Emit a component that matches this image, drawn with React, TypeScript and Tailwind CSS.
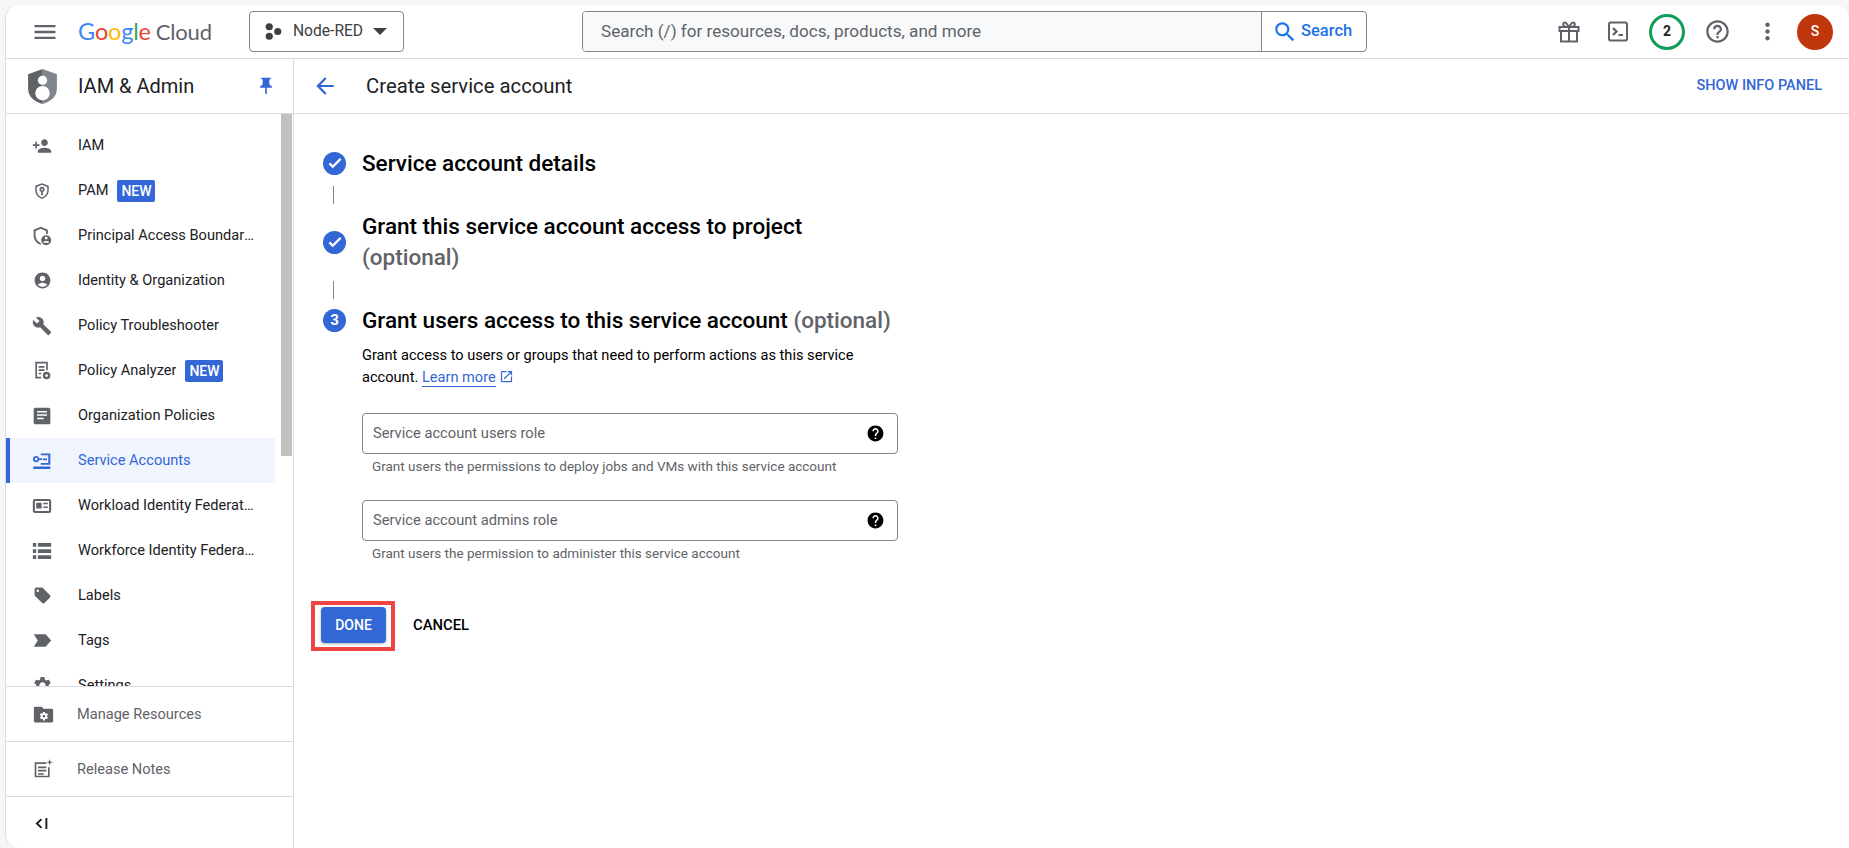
import React from "react";
import {
  MdAccountCircle, MdArrowBack, MdBuild, MdHelp, MdHelpOutline, MdMenu, MdMoreVert,
  MdOpenInNew, MdPushPin, MdSearch, MdSettings,
} from "react-icons/md";

const I = ({ children, className = "" }: { children: React.ReactNode; className?: string }) => (
  <svg viewBox="0 0 24 24" fill="currentColor" className={className}>{children}</svg>
);

const PersonAdd = () => (
  <I className="w-[20px] h-[20px]"><path d="M15 12c2.210 0 4-1.790 4-4s-1.790-4-4-4-4 1.790-4 4 1.790 4 4 4zm-9-2V7H4v3H1v2h3v3h2v-3h3v-2H6zm9 4c-2.670 0-8 1.340-8 4v2h16v-2c0-2.660-5.330-4-8-4z" /></I>
);
const ShieldKey = () => (
  <I className="w-[18px] h-[18px]"><path fillRule="evenodd" d="M12 1.500 3 5v6.100c0 5.400 3.800 10.100 9 11.400 5.200-1.300 9-6 9-11.400V5l-9-3.500zm0 2.300 7 2.700v4.600c0 4.400-2.900 8.300-7 9.500-4.100-1.200-7-5.100-7-9.500V6.500l7-2.700z" /><path fillRule="evenodd" d="M12 6.500a3.500 3.500 0 0 0-1.200 6.800V17.500h2.400v-4.200A3.500 3.500 0 0 0 12 6.500zm0 2.300a1.200 1.200 0 1 1 0 2.400 1.200 1.200 0 0 1 0-2.400z" /></I>
);
const ShieldLock = () => (
  <I className="w-[20px] h-[20px]"><path d="M10.500 1 2 4.500v6.500c0 5.300 3.500 10 8.500 11.500l.9-.3a7 7 0 0 1-1.500-2C6.500 18.400 4.200 14.900 4.200 11V6l6.300-2.600L16.800 6v3.500H19v-5L10.500 1z" /><path fillRule="evenodd" d="M17 11a6 6 0 1 0 0 12 6 6 0 0 0 0-12zm0 1.800a1.700 1.700 0 1 1 0 3.400 1.700 1.700 0 0 1 0-3.400zm-3.300 6c.9-1.200 5.700-1.200 6.600 0v1.400h-6.600v-1.400z" /></I>
);
const Analyzer = () => (
  <I className="w-[20px] h-[20px]"><path fillRule="evenodd" d="M4 1h15v10h-2V3H6v16h5v2H4V1zm4 5h7v2H8V6zm0 4h7v2H8v-2zm0 4h3v2H8v-2z" /><path fillRule="evenodd" d="M17.500 13a4.500 4.500 0 1 0 0 9 4.500 4.500 0 0 0 0-9zm0 2.800a1.700 1.700 0 1 1 0 3.400 1.700 1.700 0 0 1 0-3.400z" /></I>
);
const OrgPolicy = () => (
  <I className="w-[20px] h-[20px]"><path fillRule="evenodd" d="M4 2h16a2 2 0 0 1 2 2v16a2 2 0 0 1-2 2H4a2 2 0 0 1-2-2V4a2 2 0 0 1 2-2zm2 4v1.800h12V6H6zm0 4v1.800h12V10H6zm0 4v1.800h8V14H6z" /></I>
);
const ServiceAcc = () => (
  <I className="w-[20px] h-[20px]"><path fillRule="evenodd" d="M5 6a3.800 3.800 0 0 1 3.600 2.600H12v2.200H8.600A3.800 3.800 0 1 1 5 6zm0 2.200a1.600 1.600 0 1 0 0 3.200 1.600 1.600 0 0 0 0-3.200z" /><path d="M10.500 3h11.500v13.500H10.500v-2h9V5h-9V3zM1.500 18.500H22v3H1.500v-3zM13 9h5v2h-5z" /></I>
);
const Workload = () => (
  <I className="w-[20px] h-[20px]"><path fillRule="evenodd" d="M3.500 3.500h17A2.500 2.500 0 0 1 23 6v12a2.500 2.500 0 0 1-2.500 2.500h-17A2.500 2.500 0 0 1 1 18V6a2.500 2.500 0 0 1 2.500-2.500zM3.500 6v12h17V6h-17zM5 8h6.500v7H5V8zm8.500 0H19v2h-5.500V8zm0 4.500H19v2h-5.500v-2z" /></I>
);
const Lines = () => (
  <I className="w-[20px] h-[20px]"><path d="M1 2.500h4v4.500H1zM7 2.500h16v4.500H7zM1 9.800h4v4.500H1zM7 9.800h16v4.500H7zM1 17h4v4.500H1zM7 17h16v4.500H7z" /></I>
);
const TagIcon = () => (
  <I className="w-[19px] h-[19px]"><path fillRule="evenodd" d="M3.500 2H11c.6 0 1.100.2 1.500.6l9 9c.8.8.8 2 0 2.800l-7.100 7.100c-.8.8-2 .8-2.800 0l-9-9c-.4-.4-.6-.9-.6-1.500V4a2 2 0 0 1 2-2h.5zM6 4.500a1.500 1.500 0 1 0 0 3 1.500 1.500 0 0 0 0-3z" /></I>
);
const TagChevron = () => (
  <I className="w-[19px] h-[19px]"><path d="M1 4h15l7 8-7 8H1l5-8-5-8z" /></I>
);
const FolderGear = () => (
  <I className="w-[21px] h-[21px]"><path fillRule="evenodd" d="M2.500 3H10l2 2.500h9.500A1.500 1.500 0 0 1 23 7v12.500a1.500 1.500 0 0 1-1.500 1.500h-19A1.500 1.500 0 0 1 1 19.500v-15A1.500 1.500 0 0 1 2.500 3zM11.500 9l-.3 1.400-1 .6-1.300-.4-1 1.700 1 1v1.200l-1 1 1 1.700 1.300-.4 1 .6.300 1.400h2l.3-1.400 1-.6 1.300.4 1-1.700-1-1v-1.200l1-1-1-1.700-1.300.4-1-.6L13.500 9h-2zm1 3.500a1.500 1.500 0 1 1 0 3 1.500 1.500 0 0 1 0-3z" /></I>
);
const Notes = () => (
  <I className="w-[20px] h-[20px]"><path fillRule="evenodd" d="M2 4h14v2H4v14h14V10h2v12H2V4zm4 5h10v2H6V9zm0 4h10v2H6v-2zm0 4h7v2H6v-2z" /><path d="M20 0l.9 3.100L24 4l-3.100.9L20 8l-.9-3.100L16 4l3.100-.9z" /></I>
);

type Row = { label: string; icon: React.ReactNode; badge?: boolean; active?: boolean };
const rows: Row[] = [
  { label: "IAM", icon: <PersonAdd /> },
  { label: "PAM", icon: <ShieldKey />, badge: true },
  { label: "Principal Access Boundary Policies", icon: <ShieldLock /> },
  { label: "Identity & Organization", icon: <MdAccountCircle size={19} /> },
  { label: "Policy Troubleshooter", icon: <MdBuild size={20} /> },
  { label: "Policy Analyzer", icon: <Analyzer />, badge: true },
  { label: "Organization Policies", icon: <OrgPolicy /> },
  { label: "Service Accounts", icon: <ServiceAcc />, active: true },
  { label: "Workload Identity Federation", icon: <Workload /> },
  { label: "Workforce Identity Federation", icon: <Lines /> },
  { label: "Labels", icon: <TagIcon /> },
  { label: "Tags", icon: <TagChevron /> },
  { label: "Settings", icon: <MdSettings size={21} /> },
];

const Badge = () => (
  <span className="ml-[9px] shrink-0 h-[22px] w-[38px] text-center rounded-[2px] bg-[#3367d6] text-white text-[14px] font-medium leading-[22px]">NEW</span>
);

function SideRow({ r }: { r: Row }) {
  return (
    <div className={`h-[45px] mr-[6px] flex items-center ${r.active ? "bg-[#f0f4fd] border-l-[4px] border-[#3367d6] text-[#3367d6]" : "pl-[4px] text-[#202124]"}`}>
      <span className={`w-[24px] ml-[20px] mr-[24px] flex justify-center shrink-0 ${r.active ? "text-[#3367d6]" : "text-[#5f6368]"}`}>{r.icon}</span>
      <span className="text-[14.6px] leading-[20px] pb-[2px] truncate max-w-[178px]">{r.label}</span>
      {r.badge && <Badge />}
    </div>
  );
}

const CheckCircle = () => (
  <span className="w-[23px] h-[23px] rounded-full bg-[#3367d6] text-white flex items-center justify-center shrink-0">
    <svg viewBox="0 0 24 24" className="w-[18px] h-[18px]" fill="none" stroke="currentColor" strokeWidth="3"><path d="M4.500 12.500l4.500 4.500L19.500 6.500" /></svg>
  </span>
);

const Connector = ({ className }: { className: string }) => (
  <div className={`ml-[39px] w-px h-[18px] bg-[#80868b] ${className}`} />
);

function RoleField({ label, help, className }: { label: string; help: string; className: string }) {
  return (
    <div className={`ml-[68px] w-[536px] ${className}`}>
      <div className="h-[41px] rounded-[4px] border border-[#80868b] flex items-center pl-[10px] pr-[12px]">
        <span className="flex-1 text-[14.7px] text-[#5f6368]">{label}</span>
        <MdHelp size={19} className="text-black" />
      </div>
      <div className="mt-[4px] pl-[10px] text-[13.5px] leading-[16px] text-[#5f6368]">{help}</div>
    </div>
  );
}

export default function App() {
  return (
    <div className="h-[848px] w-[1849px] bg-[#f6f6f6] pl-[5px] pt-[5px] overflow-hidden text-[#202124]" style={{ fontFamily: 'Roboto, "Liberation Sans", sans-serif' }}>
      <div className="h-[843px] bg-white rounded-tl-[14px] rounded-bl-[14px] rounded-tr-[14px] border-l border-[#dadce0] flex flex-col overflow-hidden">
        {/* top bar */}
        <header className="h-[54px] shrink-0 border-b border-[#dadce0] flex items-center">
          <MdMenu size={28} className="ml-[25px] text-[#5f6368]" />
          <div className="ml-[19px] w-[132px] flex items-baseline text-[23.5px] leading-[28px] tracking-[-0.2px] whitespace-nowrap" style={{ fontFamily: 'Lato, sans-serif' }}>
            <span className="text-[#4285f4]">G</span><span className="text-[#ea4335]">o</span><span className="text-[#fbbc05]">o</span><span className="text-[#4285f4]">g</span><span className="text-[#34a853]">l</span><span className="text-[#ea4335]">e</span>
            <span className="ml-[5px] text-[22px] text-[#5f6368]">Cloud</span>
          </div>
          <div className="ml-[39px] w-[155px] h-[41px] rounded-[4px] border border-[#80868b] flex items-center pl-[15px]">
            <svg viewBox="0 0 18 18" className="w-[17px] h-[17px] text-[#3c4043]" fill="currentColor"><circle cx="4.500" cy="4" r="3.800" /><circle cx="4.500" cy="14" r="3.800" /><circle cx="13.500" cy="9" r="3.800" /></svg>
            <span className="ml-[11px] text-[15.6px] text-[#3c4043]">Node-RED</span>
            <svg viewBox="0 0 16 10" className="ml-[10px] w-[14px] h-[9px] text-[#3c4043]" fill="currentColor"><path d="M0 1h16L8 9z" /></svg>
          </div>
          <div className="ml-[178px] w-[785px] h-[41px] rounded-[4px] border border-[#80868b] flex overflow-hidden">
            <div className="flex-1 bg-[#f8f9fa] flex items-center pl-[18px] text-[17.1px] text-[#5f6368]">Search (/) for resources, docs, products, and more</div>
            <div className="w-[105px] border-l border-[#80868b] flex items-center pl-[10px] text-[#1a73e8] text-[16.5px] font-medium">
              <MdSearch size={26} />
              <span className="ml-[3px]">Search</span>
            </div>
          </div>
          <div className="ml-[190px] text-[#5f6368] w-[24px] h-[24px] flex items-center justify-center">
            <svg viewBox="0 0 24 24" fill="none" stroke="currentColor" strokeWidth="2" className="w-[26px] h-[26px]">
              <path d="M2.500 7h19v4h-19zM4 11v10.500h16V11M12 7v14.500M12 7C10.500 5 9.500 2.500 8 2.500 6.800 2.500 6 3.500 6.200 4.700 6.500 6.300 8 7 9.500 7M12 7c1.500-2 2.500-4.500 4-4.500 1.200 0 2 1 1.800 2.200C17.500 6.300 16 7 14.500 7" />
            </svg>
          </div>
          <div className="ml-[25px] text-[#5f6368] w-[24px] h-[24px] flex items-center justify-center">
            <svg viewBox="0 0 24 24" fill="none" stroke="currentColor" className="w-[25px] h-[25px]">
              <rect x="3" y="3" width="18" height="18" rx="1.800" strokeWidth="2" />
              <path d="M7 8.500l3.500 3.500L7 15.500" strokeWidth="2.300" />
              <path d="M12.500 15.500h4.500" strokeWidth="1.800" />
            </svg>
          </div>
          <div className="ml-[19px] w-[36px] h-[36px] rounded-full border-[3px] border-[#0f9d58] flex items-center justify-center text-[14px] font-bold text-[#202124]">2</div>
          <MdHelpOutline size={27} className="ml-[19px] text-[#5f6368]" />
          <MdMoreVert size={27} className="ml-[23px] text-[#5f6368]" />
          <div className="ml-[16px] w-[36px] h-[36px] rounded-full bg-[#bf360c] text-white text-[14px] font-medium flex items-center justify-center">S</div>
        </header>
        {/* second row */}
        <div className="flex-1 flex min-h-0">
          <aside className="w-[288px] shrink-0 border-r border-[#dadce0] flex flex-col">
            <div className="h-[55px] shrink-0 border-b border-[#dadce0] flex items-center pl-[22px]">
              <svg viewBox="0 0 28 34" className="w-[29px] h-[35px]">
                <defs>
                  <linearGradient id="shieldShade" x1="0" x2="1" y1="0" y2="0">
                    <stop offset="0.5" stopColor="#5f6368" />
                    <stop offset="0.5" stopColor="#80868b" />
                  </linearGradient>
                </defs>
                <path d="M14 0 28 5v14c0 8-6 13-14 15C6 32 0 27 0 19V5L14 0z" fill="url(#shieldShade)" />
                <circle cx="14" cy="11" r="4.500" fill="#fff" />
                <circle cx="14" cy="23.500" r="7" fill="#fff" />
              </svg>
              <span className="ml-[21px] flex-1 text-[20px] leading-[24px] text-[#202124]">IAM &amp; Admin</span>
              <MdPushPin size={20} className="mr-[17px] text-[#3367d6]" />
            </div>
            <div className="h-[572px] shrink-0 flex overflow-hidden">
              <div className="w-[275px] shrink-0 pt-[9px]">
                {rows.map((r) => <SideRow key={r.label} r={r} />)}
              </div>
              <div className="w-[11px] shrink-0 bg-white">
                <div className="h-[342px] bg-[#c1c1c1]" />
              </div>
            </div>
            <div className="h-[55px] shrink-0 border-t border-[#dadce0] flex items-center pl-[27px] text-[14.6px] text-[#5f6368]">
              <FolderGear /><span className="ml-[23px] pt-[2px]">Manage Resources</span>
            </div>
            <div className="h-[55px] shrink-0 border-t border-[#dadce0] flex items-center pl-[27px] text-[14.6px] text-[#5f6368]">
              <Notes /><span className="ml-[24px] pt-[2px]">Release Notes</span>
            </div>
            <div className="flex-1 border-t border-[#dadce0] flex items-center pl-[29px] pt-[2px] text-[#202124]">
              <svg viewBox="0 0 12 10" className="w-[13px] h-[11px]" fill="none" stroke="currentColor" strokeWidth="1.800"><path d="M6 1 1.800 5 6 9M10.500 0v10" /></svg>
            </div>
          </aside>
          <main className="flex-1 flex flex-col min-w-0">
            <div className="h-[55px] shrink-0 border-b border-[#dadce0] flex items-center pl-[18px] pr-[27px]">
              <MdArrowBack size={26} className="text-[#3367d6]" />
              <span className="ml-[28px] flex-1 text-[20.3px] leading-[24px] text-[#202124]">Create service account</span>
              <span className="text-[14.5px] font-medium text-[#3367d6]">SHOW INFO PANEL</span>
            </div>
            <section className="flex-1 pt-[35px]">
              <div className="flex items-center h-[28px] pl-[29px]">
                <CheckCircle />
                <h2 className="ml-[16px] text-[22.5px] leading-[28px] font-medium text-black">Service account details</h2>
              </div>
              <Connector className="mt-[9px]" />
              <div className="flex items-center pl-[29px] mt-[7px]">
                <CheckCircle />
                <h2 className="ml-[16px] text-[22.5px] leading-[31px] font-medium text-black">
                  Grant this service account access to project<br /><span className="text-[#5f6368]">(optional)</span>
                </h2>
              </div>
              <Connector className="mt-[8px]" />
              <div className="flex items-center h-[28px] pl-[29px] mt-[7px]">
                <span className="w-[23px] h-[23px] rounded-full bg-[#3367d6] text-white text-[15px] font-bold flex items-center justify-center">3</span>
                <h2 className="ml-[16px] text-[22.5px] leading-[28px] font-medium text-black whitespace-nowrap">
                  Grant users access to this service account <span className="text-[#5f6368]">(optional)</span>
                </h2>
              </div>
              <p className="ml-[68px] mt-[10px] w-[520px] text-[14.6px] leading-[22px] text-black">
                Grant access to users or groups that need to perform actions as this service account.{" "}
                <span className="text-[#3367d6] border-b border-[#3367d6]">Learn more</span>
                <MdOpenInNew size={15} className="inline ml-[3px] align-[-2px] text-[#3367d6]" />
              </p>
              <RoleField className="mt-[25px]" label="Service account users role" help="Grant users the permissions to deploy jobs and VMs with this service account" />
              <RoleField className="mt-[26px]" label="Service account admins role" help="Grant users the permission to administer this service account" />
              <div className="mt-[40px] ml-[17px] flex items-center">
                <div className="border-[4px] border-[#ef4444] pl-[6px] pt-[2px] w-[84px] h-[50px]">
                  <div className="w-[65px] h-[36px] rounded-[4px] bg-[#3367d6] text-white text-[14px] font-medium flex items-center justify-center shadow-[0_1px_3px_rgba(60,64,67,0.4)]">DONE</div>
                </div>
                <span className="ml-[18px] mb-[2px] text-[14.8px] font-medium text-black">CANCEL</span>
              </div>
            </section>
          </main>
        </div>
      </div>
    </div>
  );
}
